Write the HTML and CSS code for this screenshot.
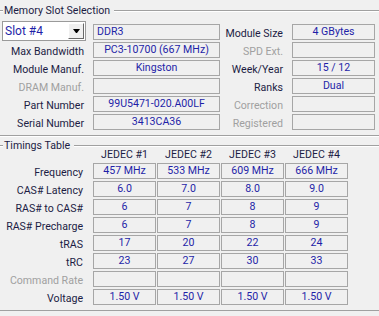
FILE: index.html
```html
<!DOCTYPE html>
<html lang="en">
<head>
    <meta charset="UTF-8">
    <meta name="viewport" content="width=device-width, initial-scale=1.0">
    <title>SPD</title>
    <link rel="stylesheet" href="styles.css">
</head>
<body>
    <section class="group slots">
        <div class="group-head"><span>Memory Slot Selection</span></div>
        <div class="slot-grid">
            <div class="combo first"><span class="combo-text">Slot #4</span><span class="combo-btn"></span></div>
            <div class="field left first">DDR3</div>
            <div class="label first">Module Size</div>
            <div class="field first">4 GBytes</div>

            <div class="label">Max Bandwidth</div>
            <div class="field">PC3-10700 (667 MHz)</div>
            <div class="label off">SPD Ext.</div>
            <div class="field"></div>

            <div class="label">Module Manuf.</div>
            <div class="field">Kingston</div>
            <div class="label">Week/Year</div>
            <div class="field">15 / 12</div>

            <div class="label off">DRAM Manuf.</div>
            <div class="field"></div>
            <div class="label">Ranks</div>
            <div class="field">Dual</div>

            <div class="label">Part Number</div>
            <div class="field">99U5471-020.A00LF</div>
            <div class="label off">Correction</div>
            <div class="field"></div>

            <div class="label">Serial Number</div>
            <div class="field">3413CA36</div>
            <div class="label off">Registered</div>
            <div class="field"></div>
        </div>
    </section>

    <section class="group timings">
        <div class="group-head short"><span>Timings Table</span></div>
        <div class="timing-grid">
            <div></div>
            <div class="col-head">JEDEC #1</div>
            <div class="col-head">JEDEC #2</div>
            <div class="col-head">JEDEC #3</div>
            <div class="col-head">JEDEC #4</div>

            <div class="label">Frequency</div>
            <div class="field">457 MHz</div>
            <div class="field">533 MHz</div>
            <div class="field">609 MHz</div>
            <div class="field">666 MHz</div>

            <div class="label">CAS# Latency</div>
            <div class="field">6.0</div>
            <div class="field">7.0</div>
            <div class="field">8.0</div>
            <div class="field">9.0</div>

            <div class="label">RAS# to CAS#</div>
            <div class="field">6</div>
            <div class="field">7</div>
            <div class="field">8</div>
            <div class="field">9</div>

            <div class="label">RAS# Precharge</div>
            <div class="field">6</div>
            <div class="field">7</div>
            <div class="field">8</div>
            <div class="field">9</div>

            <div class="label">tRAS</div>
            <div class="field">17</div>
            <div class="field">20</div>
            <div class="field">22</div>
            <div class="field">24</div>

            <div class="label">tRC</div>
            <div class="field">23</div>
            <div class="field">27</div>
            <div class="field">30</div>
            <div class="field">33</div>

            <div class="label off">Command Rate</div>
            <div class="field"></div>
            <div class="field"></div>
            <div class="field"></div>
            <div class="field"></div>

            <div class="label">Voltage</div>
            <div class="field">1.50 V</div>
            <div class="field">1.50 V</div>
            <div class="field">1.50 V</div>
            <div class="field">1.50 V</div>
        </div>
    </section>
</body>
</html>
```

FILE: styles.css
```css
* {
    box-sizing: border-box;
}

body {
    margin: 0;
    background: #f0f0f0;
    font-family: Roboto, "Liberation Sans", sans-serif;
    font-size: 10.6px;
    color: #1c1c44;
}

/* group boxes */
.group {
    border-bottom: 1px solid #a0a0a0;
    box-shadow: 0 1px 0 #fff;
}

.slots {
    padding: 1px 0 3px;
}

.timings {
    padding: 0 0 3px;
}

.group-head {
    display: flex;
    height: 20px;
}

.group-head.short {
    height: 11px;
}

.group-head span {
    line-height: 20px;
    white-space: nowrap;
}

.group-head::before,
.group-head::after {
    content: "";
    height: 0;
    margin-top: 9px;
    border-top: 1px solid #a0a0a0;
    border-bottom: 1px solid #fff;
}

.group-head::before {
    width: 3px;
    margin-right: 1px;
}

.group-head::after {
    flex: 1;
    margin-left: 4px;
}

/* slot section */
.slot-grid {
    display: grid;
    grid-template-columns: 93px 127px 72px 83px;
    grid-template-rows: 21px repeat(5, 18px);
    align-items: start;
}

.first {
    margin-top: 3px;
}

.combo {
    margin: 0 0 0 2px;
    width: 84px;
    height: 20px;
    display: flex;
    align-items: center;
    background: #fff;
    border: 1px solid #9a9a9a;
}

.combo-text {
    padding-left: 2px;
    color: #1f1fa8;
    font-size: 12px;
}

.combo-btn {
    margin-left: auto;
    width: 16px;
    height: 16px;
    margin-right: 1px;
    background: #f0f0f0;
    border: 1px solid;
    border-color: #fff #696969 #696969 #fff;
    display: flex;
    align-items: center;
    justify-content: center;
}

.combo-btn::after {
    content: "";
    width: 1px;
    border-top: 4px solid #000;
    border-left: 3px solid transparent;
    border-right: 3px solid transparent;
}

.label {
    text-align: right;
    padding: 2px 9px 0 0;
    line-height: 16px;
    white-space: nowrap;
}

.label.off {
    color: #a0a0a0;
}

.field {
    height: 16px;
    border: 1px solid #a6a6a6;
    line-height: 14px;
    text-align: center;
    color: #1f1fa8;
    white-space: nowrap;
    overflow: hidden;
}

.field.left {
    text-align: left;
    padding-left: 3px;
}

/* timings section */
.timing-grid {
    display: grid;
    grid-template-columns: 92px repeat(4, 63px);
    grid-template-rows: 16px repeat(8, 18px);
    column-gap: 1px;
    align-items: start;
}

.col-head {
    text-align: center;
    line-height: 16px;
}
```
